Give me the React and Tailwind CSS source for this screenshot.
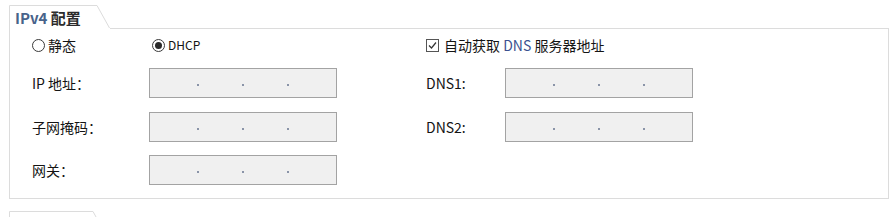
import React from "react";

const font = { fontFamily: '"Noto Sans CJK SC", "Noto Sans", sans-serif' };

function Radio({ checked, children }) {
  return (
    <div className="flex items-center gap-[3px]">
      <span className="flex h-[13px] w-[13px] items-center justify-center rounded-full border-[1.5px] border-[#3a3a3a] bg-white">
        {checked && <span className="h-[7px] w-[7px] rounded-full bg-[#2a2a2a]" />}
      </span>
      <span>{children}</span>
    </div>
  );
}

function Checkbox({ children }) {
  return (
    <div className="flex items-center gap-[5px]">
      <span className="flex h-[13px] w-[13px] items-center justify-center border border-[#555] bg-white">
        <svg width="11" height="11" viewBox="0 0 11 11">
          <path d="M2 5.5 L4.5 8 L9 2.5" fill="none" stroke="#333" strokeWidth="1.2" />
        </svg>
      </span>
      <span>{children}</span>
    </div>
  );
}

function IpInput() {
  return (
    <div className="flex h-[30px] w-[188px] items-center justify-center gap-[43px] border border-[#a3a3a3] bg-[#f0f0f0] pt-[3px]">
      <span className="h-[2px] w-[2px] bg-[#8a94a8]" />
      <span className="h-[2px] w-[2px] bg-[#8a94a8]" />
      <span className="h-[2px] w-[2px] bg-[#8a94a8]" />
    </div>
  );
}

function Tab({ children }) {
  return (
    <div className="relative h-[23px] w-[101px]">
      <svg className="absolute left-0 top-0 overflow-visible" width="101" height="23">
        <path d="M0.5 23 V0.5 H88 L100.5 23" fill="none" stroke="#dcdcdc" strokeWidth="1" />
      </svg>
      <div className="relative flex h-full items-center pl-[6px] pt-[2px]">{children}</div>
    </div>
  );
}

export default function App() {
  return (
    <div className="h-[217px] w-[893px] overflow-hidden bg-white text-[14px] text-[#141414]" style={font}>
      <div className="pl-[9px] pr-[4px] pt-[5px]">
        <Tab>
          <span className="font-bold text-[15px] leading-none">
            <span className="text-[#48638a]">IPv4</span> <span className="text-[#2b2b2b]">配置</span>
          </span>
        </Tab>
        <div className="h-[171px] border-b border-l border-r border-[#dcdcdc] bg-white">
          <div className="flex h-px">
            <div className="w-[100px]" />
            <div className="flex-1 bg-[#dcdcdc]" />
          </div>
          <div className="flex flex-col pl-[22px] pt-[5px] leading-none">
            <div className="flex h-[22px] items-center">
              <div className="w-[117px]">
                <Radio>静态</Radio>
              </div>
              <div className="w-[188px] pl-[3px] text-[12px]">
                <Radio checked>DHCP</Radio>
              </div>
              <div className="w-[89px]" />
              <Checkbox>
                自动获取 <span className="text-[#3b5190]">DNS</span> 服务器地址
              </Checkbox>
            </div>
            <div className="mt-[12px] flex items-center">
              <div className="w-[117px]">IP 地址：</div>
              <IpInput />
              <div className="w-[89px]" />
              <div className="w-[79px]">DNS1:</div>
              <IpInput />
            </div>
            <div className="mt-[14px] flex items-center">
              <div className="w-[117px]">子网掩码：</div>
              <IpInput />
              <div className="w-[89px]" />
              <div className="w-[79px]">DNS2:</div>
              <IpInput />
            </div>
            <div className="mt-[13px] flex items-center">
              <div className="w-[117px]">网关：</div>
              <IpInput />
            </div>
          </div>
        </div>
        <div className="mt-[12px]">
          <div className="relative h-[23px] w-[101px]">
            <svg className="absolute left-0 top-0 overflow-visible" width="101" height="23">
              <path d="M0.5 23 V0.5 H84 L96.5 23" fill="none" stroke="#dcdcdc" strokeWidth="1" />
            </svg>
          </div>
        </div>
      </div>
    </div>
  );
}
